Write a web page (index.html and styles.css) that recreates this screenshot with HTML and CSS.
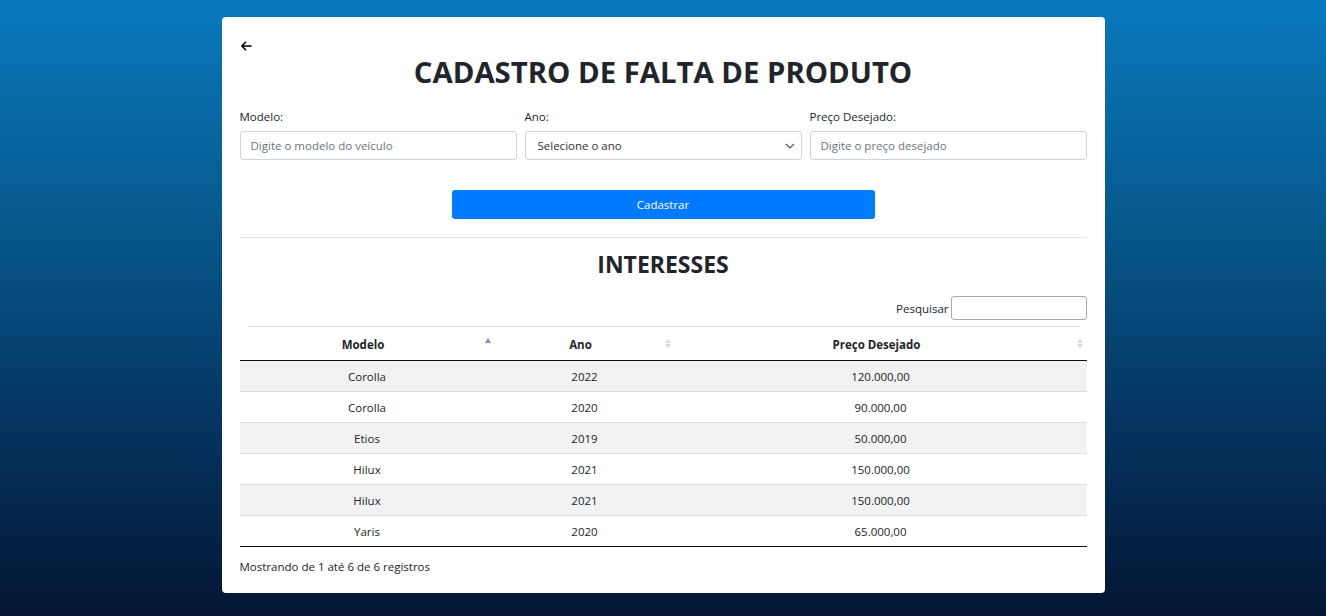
FILE: index.html
```html
<!DOCTYPE html>
<html lang="pt-BR">
<head>
<meta charset="utf-8">
<title>Cadastro de Falta de Produto</title>
<link rel="stylesheet" href="styles.css">
</head>
<body>
<main class="card">
  <div class="back-row">
    <a class="back" href="#" aria-label="Voltar">
      <svg width="12" height="12" viewBox="0 0 12 12"><path d="M11 6H1.8M5.6 2.2L1.8 6l3.8 3.8" fill="none" stroke="#000" stroke-width="1.6" stroke-linecap="round" stroke-linejoin="round"/></svg>
    </a>
  </div>
  <h1 class="title">CADASTRO DE FALTA DE PRODUTO</h1>
  <form class="form">
    <div class="fields">
      <div class="field">
        <label class="label">Modelo:</label>
        <input class="input" type="text" placeholder="Digite o modelo do veículo">
      </div>
      <div class="field">
        <label class="label">Ano:</label>
        <div class="select">
          <span>Selecione o ano</span>
          <svg width="10" height="6" viewBox="0 0 10 6"><path d="M1 1l4 4 4-4" fill="none" stroke="#555" stroke-width="1.2"/></svg>
        </div>
      </div>
      <div class="field">
        <label class="label">Preço Desejado:</label>
        <input class="input" type="text" placeholder="Digite o preço desejado">
      </div>
    </div>
    <div class="actions"><button class="btn" type="button">Cadastrar</button></div>
  </form>
  <hr class="divider">
  <h2 class="subtitle">INTERESSES</h2>
  <div class="search-row">
    <label class="search-label">Pesquisar</label>
    <input class="search-input" type="text">
  </div>
  <div class="top-line"></div>
  <table class="table">
    <thead>
      <tr>
        <th class="c1">Modelo<span class="sort asc"></span></th>
        <th class="c2">Ano<span class="sort both"></span></th>
        <th class="c3">Preço Desejado<span class="sort both"></span></th>
      </tr>
    </thead>
    <tbody>
      <tr class="odd"><td>Corolla</td><td>2022</td><td>120.000,00</td></tr>
      <tr><td>Corolla</td><td>2020</td><td>90.000,00</td></tr>
      <tr class="odd"><td>Etios</td><td>2019</td><td>50.000,00</td></tr>
      <tr><td>Hilux</td><td>2021</td><td>150.000,00</td></tr>
      <tr class="odd"><td>Hilux</td><td>2021</td><td>150.000,00</td></tr>
      <tr><td>Yaris</td><td>2020</td><td>65.000,00</td></tr>
    </tbody>
  </table>
  <p class="info">Mostrando de 1 até 6 de 6 registros</p>
</main>
</body>
</html>
```

FILE: styles.css
```css
* { box-sizing: border-box; }
html, body { margin: 0; height: 616px; }
body {
  background: linear-gradient(180deg, #0879bc 0%, #075a8e 35%, #053866 65%, #031633 100%);
  font-family: "Open Sans", "Noto Sans", sans-serif;
  color: #212529;
  font-size: 12px;
  padding-top: 17px;
  overflow: hidden;
}
.card {
  width: 883px;
  height: 576px;
  margin: 0 auto;
  background: #fff;
  border-radius: 4px;
  padding: 17px 18px 17px;
}
.back-row { height: 20px; display: flex; align-items: center; }
.back { display: flex; margin-top: 3px; }
.title {
  margin: 0;
  text-align: center;
  font-size: 29.3px;
  line-height: 36px;
  font-weight: 700;
  color: #212529;
}
.form { margin-top: 18px; }
.fields { display: grid; grid-template-columns: repeat(3, 1fr); gap: 8px; }
.field { display: flex; flex-direction: column; }
.label { font-size: 11.5px; line-height: 18px; margin-bottom: 5px; }
.input, .select {
  height: 29px;
  border: 1px solid #ced4da;
  border-radius: 3px;
  padding: 0 10px;
  font-family: inherit;
  font-size: 11.5px;
  color: #495057;
  background: #fff;
}
.input::placeholder { color: #6c757d; }
.select { display: flex; align-items: center; justify-content: space-between; padding: 0 6px 0 12px; color: #333; }
.actions { display: flex; justify-content: center; margin-top: 30px; }
.btn {
  width: 423px;
  height: 29px;
  border: 0;
  border-radius: 3px;
  background: #007bff;
  color: #fff;
  font-family: inherit;
  font-size: 11.5px;
}
.divider { border: 0; border-top: 1px solid #e3e3e3; margin: 18px 0 0; }
.subtitle {
  margin: 11px 0 0;
  text-align: center;
  font-size: 23px;
  line-height: 30px;
  font-weight: 700;
}
.search-row { display: flex; justify-content: flex-end; align-items: center; margin-top: 17px; height: 24px; }
.search-label { font-size: 11.5px; margin-right: 2px; }
.search-input { width: 136px; height: 24px; border: 1px solid #aaa; border-radius: 3px; }
.top-line { border-top: 1px solid #e0e0e0; margin: 6px 7px 0 8px; }
.table { width: 100%; border-collapse: collapse; font-size: 11.5px; }
.table th {
  position: relative;
  height: 33px;
  font-weight: 700;
  border-bottom: 1px solid #111;
  padding: 3px 18px 0 10px;
}
.table th.c1 { width: 255px; }
.table th.c2 { width: 180px; }
.table td { height: 31px; text-align: center; border-top: 1px solid #ddd; padding: 1px 0 0; }
.table tbody tr:first-child td { border-top: 0; }
.table tr.odd td { background: #f2f2f2; }
.table tbody tr:last-child td { border-bottom: 1px solid #111; }
.sort { position: absolute; right: 4px; top: 11px; width: 6px; height: 12px; }
.sort.asc::before {
  content: ""; position: absolute; left: 0; top: 0;
  border-left: 3px solid transparent; border-right: 3px solid transparent; border-bottom: 5px solid #8a8ad6;
}
.sort.both::before, .sort.both::after {
  content: ""; position: absolute; left: 0;
  border-left: 3px solid transparent; border-right: 3px solid transparent;
}
.sort.both::before { top: 1px; border-bottom: 4px solid #dcdcdc; }
.sort.both::after { top: 6px; border-top: 4px solid #dcdcdc; }
.info { margin: 11px 0 0; font-size: 11.5px; line-height: 18px; }
```
